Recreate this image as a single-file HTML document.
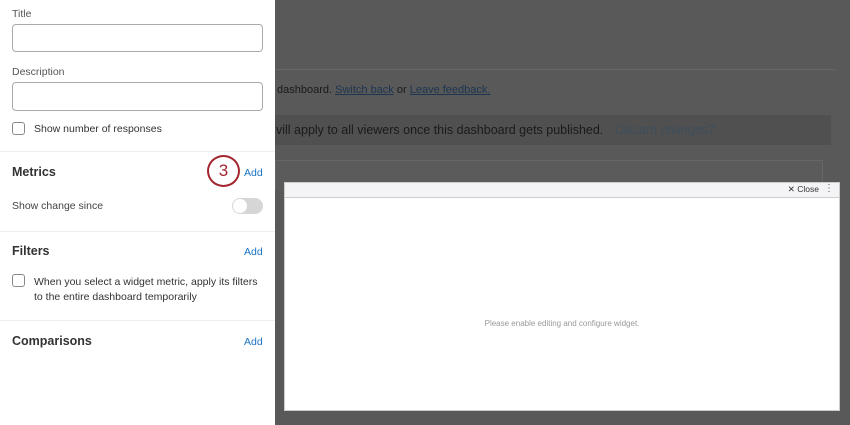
<!DOCTYPE html>
<html><head><style>
*{box-sizing:border-box;margin:0;padding:0}
body{width:850px;height:425px;overflow:hidden;background:#595959;font-family:"Liberation Sans",sans-serif;position:relative}
.abs{position:absolute}
.side{left:0;top:0;width:275px;height:425px;background:#fff}
.lbl{font-size:10.5px;color:#555}
.inp{border:1px solid #aaa;border-radius:4px;background:#fff}
.h{font-size:12.5px;font-weight:bold;color:#333}
.add{font-size:10.5px;color:#1a73c6}
.sep{height:1px;background:#eee;left:0;width:275px}
.cb{width:13px;height:13px;border:1px solid #888;border-radius:3px}
.t{font-size:10.5px;color:#333}
</style></head><body>
<div class="abs side">
 <div class="abs lbl" style="left:12px;top:8px">Title</div>
 <div class="abs inp" style="left:12px;top:24px;width:251px;height:28px"></div>
 <div class="abs lbl" style="left:12px;top:66px">Description</div>
 <div class="abs inp" style="left:12px;top:82px;width:251px;height:29px"></div>
 <div class="abs cb" style="left:12px;top:122px"></div>
 <div class="abs t" style="left:34px;top:123px">Show number of responses</div>
 <div class="abs sep" style="top:151px"></div>
 <div class="abs h" style="left:12px;top:165px">Metrics</div>
 <div class="abs" style="left:207px;top:155px;width:33px;height:32px;border:2px solid #a3262f;border-radius:50%;color:#a3262f;font-size:17px;text-align:center;line-height:27px">3</div>
 <div class="abs add" style="left:244px;top:167px">Add</div>
 <div class="abs t" style="left:12px;top:200px;color:#444">Show change since</div>
 <div class="abs" style="left:232px;top:198px;width:31px;height:16px;border-radius:8px;background:#d6d6d6"><div style="margin:1px;width:14px;height:14px;border-radius:50%;background:#fff"></div></div>
 <div class="abs sep" style="top:231px"></div>
 <div class="abs h" style="left:12px;top:244px">Filters</div>
 <div class="abs add" style="left:244px;top:246px">Add</div>
 <div class="abs cb" style="left:12px;top:274px"></div>
 <div class="abs t" style="left:34px;top:275px;line-height:15px">When you select a widget metric, apply its filters<br>to the entire dashboard temporarily</div>
 <div class="abs sep" style="top:320px"></div>
 <div class="abs h" style="left:12px;top:334px">Comparisons</div>
 <div class="abs add" style="left:244px;top:336px">Add</div>
</div>
<div class="abs" style="left:275px;top:69px;width:560px;height:1px;background:#666"></div>
<div class="abs" style="left:277px;top:84px;font-size:11px;color:#1a1a1a">dashboard. <u style="color:#1d3550">Switch back</u> or <u style="color:#1d3550">Leave feedback.</u></div>
<div class="abs" style="left:275px;top:115px;width:556px;height:30px;background:#505050"></div>
<div class="abs" style="left:276px;top:123px;font-size:12.5px;color:#1a1a1a">vill apply to all viewers once this dashboard gets published. <span style="color:#3d4e5c;margin-left:8px">Discard changes?</span></div>
<div class="abs" style="left:275px;top:160px;width:548px;height:30px;border:1px solid #666;border-bottom:none;background:#5b5b5b"></div>
<div class="abs" style="left:284px;top:182px;width:556px;height:229px;background:#fff;border:1px solid #ccc">
 <div style="height:15px;background:#f4f4f6;border-bottom:1px solid #ccc;position:relative">
  <span style="position:absolute;right:20px;top:1px;font-size:8.5px;color:#333">✕ Close</span>
  <span style="position:absolute;right:5px;top:0px;font-size:10px;color:#555">⋮</span>
 </div>
 <div style="position:absolute;left:0;right:0;top:136px;text-align:center;font-size:8px;color:#999">Please enable editing and configure widget.</div>
</div>
</body></html>
